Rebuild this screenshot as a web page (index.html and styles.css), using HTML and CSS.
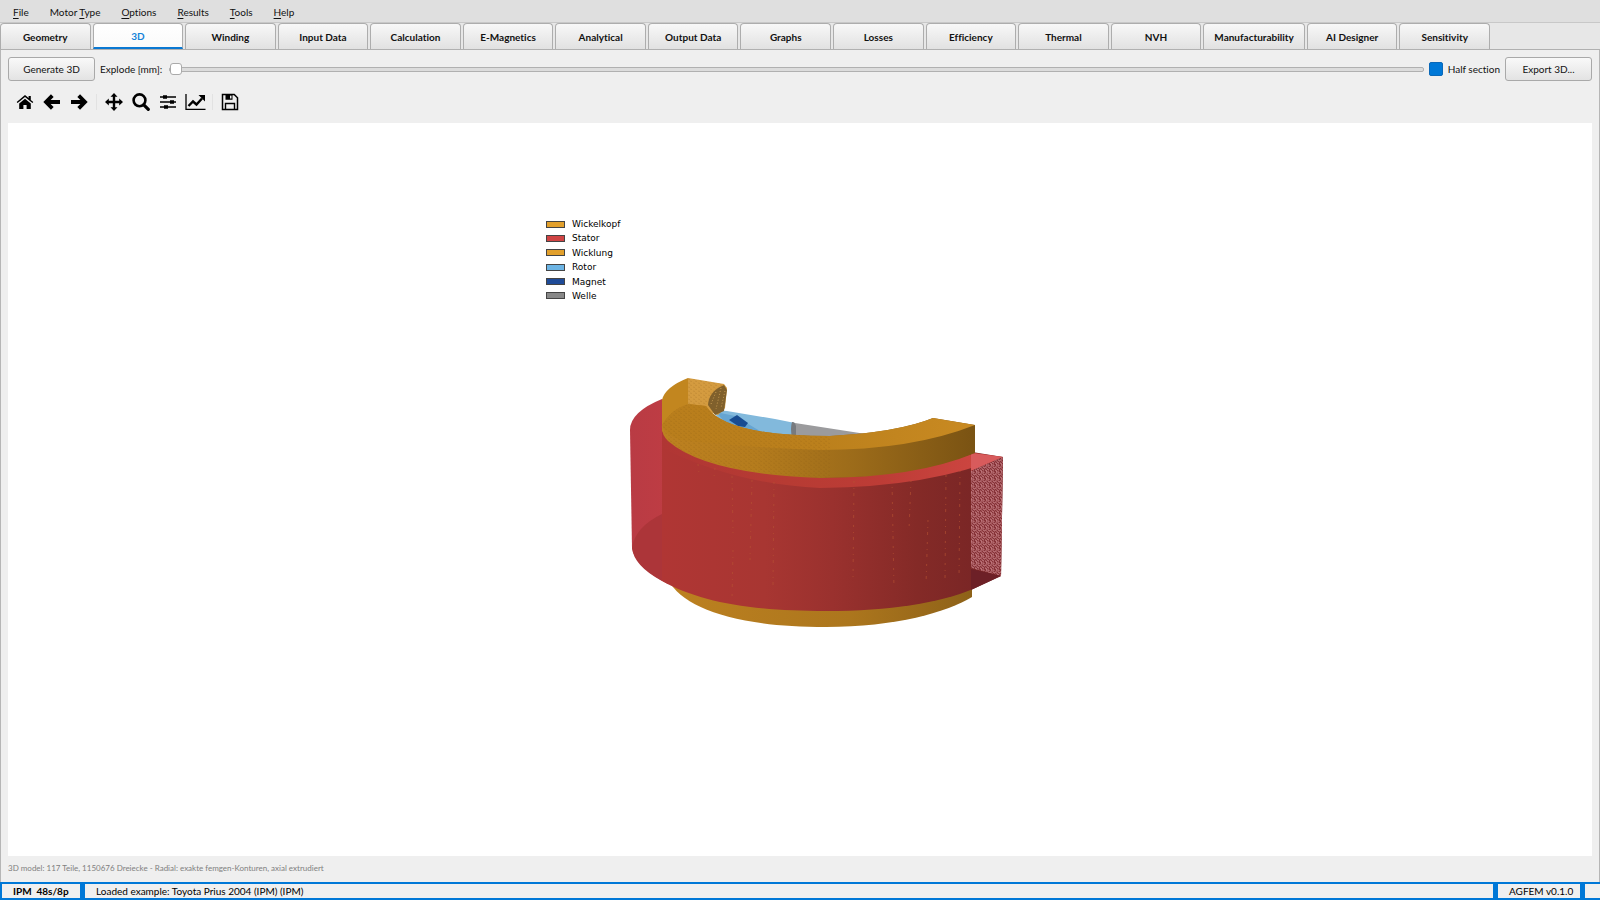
FILE: index.html
```html
<!DOCTYPE html>
<html lang="en">
<head>
<meta charset="utf-8">
<title>AGFEM</title>
<link rel="stylesheet" href="styles.css">
</head>
<body>
<nav class="menubar">
  <a href="#"><u>F</u>ile</a>
  <a href="#">Motor <u>T</u>ype</a>
  <a href="#"><u>O</u>ptions</a>
  <a href="#"><u>R</u>esults</a>
  <a href="#"><u>T</u>ools</a>
  <a href="#"><u>H</u>elp</a>
</nav>
<div class="tabbar" role="tablist">
  <div class="tabs">
    <button class="tab" role="tab">Geometry</button>
    <button class="tab active" role="tab" aria-selected="true">3D</button>
    <button class="tab" role="tab">Winding</button>
    <button class="tab" role="tab">Input Data</button>
    <button class="tab" role="tab">Calculation</button>
    <button class="tab" role="tab">E-Magnetics</button>
    <button class="tab" role="tab">Analytical</button>
    <button class="tab" role="tab">Output Data</button>
    <button class="tab" role="tab">Graphs</button>
    <button class="tab" role="tab">Losses</button>
    <button class="tab" role="tab">Efficiency</button>
    <button class="tab" role="tab">Thermal</button>
    <button class="tab" role="tab">NVH</button>
    <button class="tab" role="tab">Manufacturability</button>
    <button class="tab" role="tab">AI Designer</button>
    <button class="tab" role="tab">Sensitivity</button>
  </div>
</div>
<main class="page">
  <div class="controls">
    <button class="btn generate">Generate 3D</button>
    <label for="explode">Explode [mm]:</label>
    <input id="explode" class="slider" type="range" min="0" max="100" value="0">
    <input id="half" class="check" type="checkbox" checked>
    <label for="half" class="half-label">Half section</label>
    <button class="btn export">Export 3D...</button>
  </div>
  <div class="toolbar">
    <button aria-label="Home"><svg viewBox="0 0 18 18"><path d="M9 5.700 3.200 10.500V16h4.200v-4h3.200v4h4.200V10.500z"/><path d="M9 2 .7 9l.9 1L9 3.900l7.400 6.100.900-1-2.500-2.100V3h-2.200v2.100z"/></svg></button>
    <button aria-label="Back"><svg viewBox="0 0 18 18"><path d="M9.300 2.600 3 9l6.300 6.400M3.500 9H17" fill="none" stroke="#000" stroke-width="3.800"/></svg></button>
    <button aria-label="Forward"><svg viewBox="0 0 18 18"><path d="M8.700 2.600 15 9l-6.300 6.400M14.500 9H1" fill="none" stroke="#000" stroke-width="3.800"/></svg></button>
    <span class="sep"></span>
    <button aria-label="Pan"><svg viewBox="0 0 18 18"><path d="M9 0l3.500 3.800H10.200V7.800h4V5.500L18 9l-3.800 3.500V10.200h-4v4h2.300L9 18l-3.500-3.800H7.800v-4h-4v2.300L0 9l3.800-3.500V7.800h4v-4H5.500z"/></svg></button>
    <button aria-label="Zoom"><svg viewBox="0 0 18 18"><circle cx="7.500" cy="7.300" r="5.900" fill="none" stroke="#000" stroke-width="2.600"/><path d="M11.800 11.800 16.300 16.300" stroke="#000" stroke-width="3.200" stroke-linecap="round"/></svg></button>
    <button aria-label="Subplots"><svg viewBox="0 0 18 18"><path d="M1 4h16M1 9h16M1 14h16" stroke="#000" stroke-width="1.500"/><path d="M4 2.300h4v3.400H4zM11 7.300h4v3.400h-4zM5 12.300h4v3.400H5z"/></svg></button>
    <button aria-label="Axes"><svg class="wide" viewBox="0 0 21 18"><path d="M1 1v15.300h19.500" fill="none" stroke="#000" stroke-width="1.300"/><path d="M3.500 13 8 8.500l3.500 3L17 5.500" fill="none" stroke="#000" stroke-width="2.400"/><path d="M13.500 2H20v6.500z"/></svg></button>
    <span class="sep"></span>
    <button aria-label="Save"><svg viewBox="0 0 18 18"><path d="M1.500 1.500h11.700l3.300 3.300v11.700h-15z" fill="none" stroke="#000" stroke-width="1.500"/><path d="M4.500 16v-5.500h9V16" fill="none" stroke="#000" stroke-width="1.400"/><path d="M4.500 1.500h7v5.300h-7zM9 2.500v3h1.500v-3z" fill-rule="evenodd"/></svg></button>
  </div>
  <section class="canvas">
    <div class="figure">
      <ul class="legend">
        <li><i class="swatch amber"></i>Wickelkopf</li>
        <li><i class="swatch red"></i>Stator</li>
        <li><i class="swatch amber"></i>Wicklung</li>
        <li><i class="swatch sky"></i>Rotor</li>
        <li><i class="swatch navy"></i>Magnet</li>
        <li><i class="swatch gray"></i>Welle</li>
      </ul>
      <svg class="model" viewBox="620 370 400 270" role="img" aria-label="Motor half section">
        <defs>
          <linearGradient id="stator" gradientUnits="userSpaceOnUse" x1="662" x2="1003" y1="0" y2="0">
            <stop offset="0" stop-color="#b03634"/><stop offset=".3" stop-color="#a83632"/><stop offset=".5" stop-color="#9a312e"/><stop offset=".75" stop-color="#842a27"/><stop offset="1" stop-color="#752425"/>
          </linearGradient>
          <linearGradient id="band" gradientUnits="userSpaceOnUse" x1="662" x2="975" y1="0" y2="0">
            <stop offset="0" stop-color="#b03634"/><stop offset=".4" stop-color="#b73b33"/><stop offset=".7" stop-color="#bd3c36"/><stop offset="1" stop-color="#cc4540"/>
          </linearGradient>
          <linearGradient id="left" x1="0" x2="1" y1="0" y2="0">
            <stop offset="0" stop-color="#b93b44"/><stop offset="1" stop-color="#c33e43"/>
          </linearGradient>
          <linearGradient id="wall" gradientUnits="userSpaceOnUse" x1="662" x2="975" y1="0" y2="0">
            <stop offset="0" stop-color="#bd8120"/><stop offset=".3" stop-color="#b57c1d"/><stop offset=".6" stop-color="#9d6c1a"/><stop offset="1" stop-color="#7a5313"/>
          </linearGradient>
          <linearGradient id="base" gradientUnits="userSpaceOnUse" x1="662" x2="975" y1="0" y2="0">
            <stop offset="0" stop-color="#bd8120"/><stop offset=".6" stop-color="#ac761d"/><stop offset="1" stop-color="#8d6118"/>
          </linearGradient>
          <linearGradient id="top" gradientUnits="userSpaceOnUse" x1="662" x2="975" y1="0" y2="0">
            <stop offset="0" stop-color="#b97e1c"/><stop offset=".5" stop-color="#bb801c"/><stop offset="1" stop-color="#c98a22"/>
          </linearGradient>
          <pattern id="mesh" width="5" height="7" patternUnits="userSpaceOnUse">
            <path d="M0 1h1v1h1v1M2 0h1v1h1M1 3h1v2M3 3h1v1M0 5h1v1M3 5h1v1h1M2 6v1" fill="none" stroke="#cf8a8e" stroke-width=".8"/>
          </pattern>
          <pattern id="grain" width="5" height="4" patternUnits="userSpaceOnUse">
            <path d="M0 1l2 .5M3 3l2 .5" stroke="#7d5210" stroke-opacity=".3" stroke-width=".6"/>
          </pattern>
        </defs>
        <path d="M668 580C684 608 735 627 826 627 895 627 948 612 972 597V580z" fill="url(#base)"/>
        <path d="M712 410 727 411 775 419 795 423 792 440H735z" fill="#82b9dc"/>
        <path d="M716 412 735 416 765 434H735z" fill="#66a5d2"/>
        <path d="M729 420 737 415 748 423 745 427 738 426z" fill="#184c91"/>
        <path d="M792 422 795 423 866 434V440H792z" fill="#9b9b9d"/>
        <path d="M792 422q3 0 4 4v12h-4q-2-10 0-16" fill="#777a7e"/>
        <path d="M662 399Q630 412 630 430L632 548Q635 567 668 584L700 580V430z" fill="url(#left)"/>
        <path d="M632 548Q635 527 662 514V581Q634 566 632 548z" fill="#ac3539"/>
        <path d="M662 425V581C700 602 750 611 826 611 890 611 940 603 973 589L1001 576 1003 457 960 450z" fill="url(#stator)"/>
        <path d="M662 425Q700 466 820 478 900 478 975 453L1003 457Q930 487 820 488 735 484 662 448z" fill="url(#band)"/>
        <path d="M971 453 1003 457 971 471z" fill="#d85b5c"/>
        <path d="M971 471 1003 457 1001 576 971 568z" fill="#863237"/>
        <path d="M971 471 1003 457 1001 576 971 568z" fill="url(#mesh)"/>
        <path d="M971 569 1001 576 971 590z" fill="#6d2027"/>
        <path d="M698 464l1 10M715 468l-1 9M732 476l1 57M733 550l-1 50M752 480l-2 80M774 482l-1 104M892 480l2 110M911 480l-2 50M928 520l-2 65M946 475l-1 105M960 470l-1 110M854 481l-1 100M931 467l-2 9M948 463l-2 9" fill="none" stroke="#b85432" stroke-opacity=".6" stroke-width="1" stroke-dasharray="2 5 1 4 3 7"/>
        <path d="M662 432V400Q665 387 688 378V404z" fill="#c2861f"/>
        <path d="M688 378 724 384 727 388 725 408 718 415 688 404z" fill="#d49b3f"/>
        <path d="M724 385Q709 391 708 405L715 415 724 411 727 390z" fill="#80602c"/>
        <path d="M721 388l-5 21M725 391l-4 17M716 392l-5 12" stroke="#c79a51" stroke-width="1" stroke-dasharray="1 2"/>
        <path d="M662 425Q670 410 688 404L706 406Q725 436 830 436 899 432 933 418L975 425V453Q915 478 820 478 706 474 668 441 661 434 662 425z" fill="url(#wall)"/>
        <path d="M662 425Q670 410 688 404L706 406Q725 436 830 436 899 432 933 418L975 425Q912 450 820 450 740 447 680 440 664 434 662 425z" fill="url(#top)"/>
        <path d="M662 425Q670 410 688 404L706 406Q725 436 830 436L830 478Q706 474 668 441z" fill="url(#grain)"/>
        <path d="M688 378 724 384 715 392 708 405 688 404z" fill="url(#grain)"/>
      </svg>
    </div>
  </section>
  <p class="info">3D model: 117 Teile, 1150676 Dreiecke - Radial: exakte femgen-Konturen, axial extrudiert</p>
</main>
<footer class="status">
  <strong class="cell machine">IPM&nbsp; 48s/8p</strong>
  <span class="cell message">Loaded example: Toyota Prius 2004 (IPM) (IPM)</span>
  <span class="cell version">AGFEM v0.1.0</span>
  <span class="grip"></span>
</footer>
</body>
</html>
```
FILE: styles.css
```css
* { box-sizing: border-box; }
body {
  margin: 0;
  height: 100vh;
  display: flex;
  flex-direction: column;
  background: #efefef;
  color: #111;
  font: 10px/16px Lato, "Noto Sans", sans-serif;
  font-variant-ligatures: none;
}
button, input { font: inherit; font-variant-ligatures: none; color: inherit; margin: 0; }
.menubar {
  display: flex;
  gap: 21px;
  height: 23px;
  padding: 4px 13px 0;
  background: #dfdfdf;
  border-bottom: 1px solid #c8c8c8;
}
.menubar a { color: inherit; text-decoration: none; }
.menubar u { text-underline-offset: 2px; }
.tabbar {
  height: 27px;
  background: #e7e7e7;
  border-bottom: 1px solid #b0b0b0;
}
.tabs {
  display: grid;
  grid-template-columns: repeat(13, 90fr) 101fr repeat(2, 90fr);
  gap: 2px;
  width: calc(100% - 110px);
  height: 26px;
}
.tab {
  min-width: 0;
  padding: 0;
  border: 1px solid #adadad;
  border-bottom: 0;
  border-radius: 4px 4px 0 0;
  background: linear-gradient(#f8f8f8, #e1e1e1);
  font-weight: 700;
  color: #111;
}
.tab.active {
  background: linear-gradient(#fff, #fafafa);
  border-bottom: 2px solid #0a78d2;
  color: #1683d8;
}
.page {
  flex: 1;
  min-height: 0;
  display: flex;
  flex-direction: column;
  padding: 7px 7px 0;
  border: solid #b6b6b6;
  border-width: 0 1px;
}
.controls { display: flex; align-items: center; gap: 5px; height: 24px; }
.btn {
  height: 24px;
  padding: 0;
  border: 1px solid #a9a9a9;
  border-radius: 3px;
  background: linear-gradient(#f9f9f9, #e3e3e3);
}
.generate { width: 87px; }
.export { width: 87px; }
.slider {
  flex: 1;
  min-width: 0;
  height: 14px;
  margin-left: 2px;
  appearance: none;
  background: transparent;
}
.slider::-webkit-slider-runnable-track {
  height: 5px;
  border: 1px solid #b0b0b0;
  border-radius: 2px;
  background: #dcdcdc;
}
.slider::-webkit-slider-thumb {
  appearance: none;
  width: 12px;
  height: 12px;
  margin-top: -5px;
  border: 1px solid #aaa;
  border-radius: 3px;
  background: #fff;
}
.check {
  appearance: none;
  width: 14px;
  height: 14px;
  border: 1px solid #0a68b8;
  border-radius: 2px;
  background: #0078d7;
}
.toolbar {
  display: flex;
  align-items: center;
  gap: 7px;
  height: 42px;
  padding-left: 7px;
}
.toolbar button {
  display: grid;
  place-items: center;
  width: 20px;
  height: 20px;
  padding: 0;
  border: 0;
  background: none;
}
.toolbar svg { width: 18px; height: 18px; }
.toolbar svg.wide { width: 21px; }
.sep { width: 1px; height: 16px; background: #e2e2e2; }
.canvas { flex: 1; min-height: 0; background: #fff; }
.figure { width: 510px; margin: 0 auto; padding-top: 94px; }
.legend {
  height: 86px;
  margin: 0;
  padding: 0 0 0 1px;
  list-style: none;
  color: #000;
  font: 9px/14px "DejaVu Sans", sans-serif;
  display: flex;
  flex-direction: column;
  justify-content: space-between;
}
.legend li { display: flex; align-items: center; gap: 7px; }
.swatch { width: 19px; height: 7px; border: 1px solid #444; }
.amber { background: #e2a02c; }
.red { background: #d04444; }
.sky { background: #6cb4e4; }
.navy { background: #1f4b98; }
.gray { background: #888; }
.model { display: block; width: 400px; height: 270px; margin: 67px 0 0 75px; }
.info { margin: 0; padding: 4px 0 6px; color: #808080; font-size: 8px; }
.status {
  display: flex;
  gap: 5px;
  height: 18px;
  padding: 2px 0 2px 2px;
  background: #0078d7;
  color: #000;
}
.cell { background: #f0f0f0; line-height: 15px; height: 14px; padding: 0 11px; white-space: nowrap; }
.machine { width: 78px; }
.message { flex: 1; }
.version { width: 82px; }
.grip { width: 15px; height: 14px; background: #f0f0f0; }
```
